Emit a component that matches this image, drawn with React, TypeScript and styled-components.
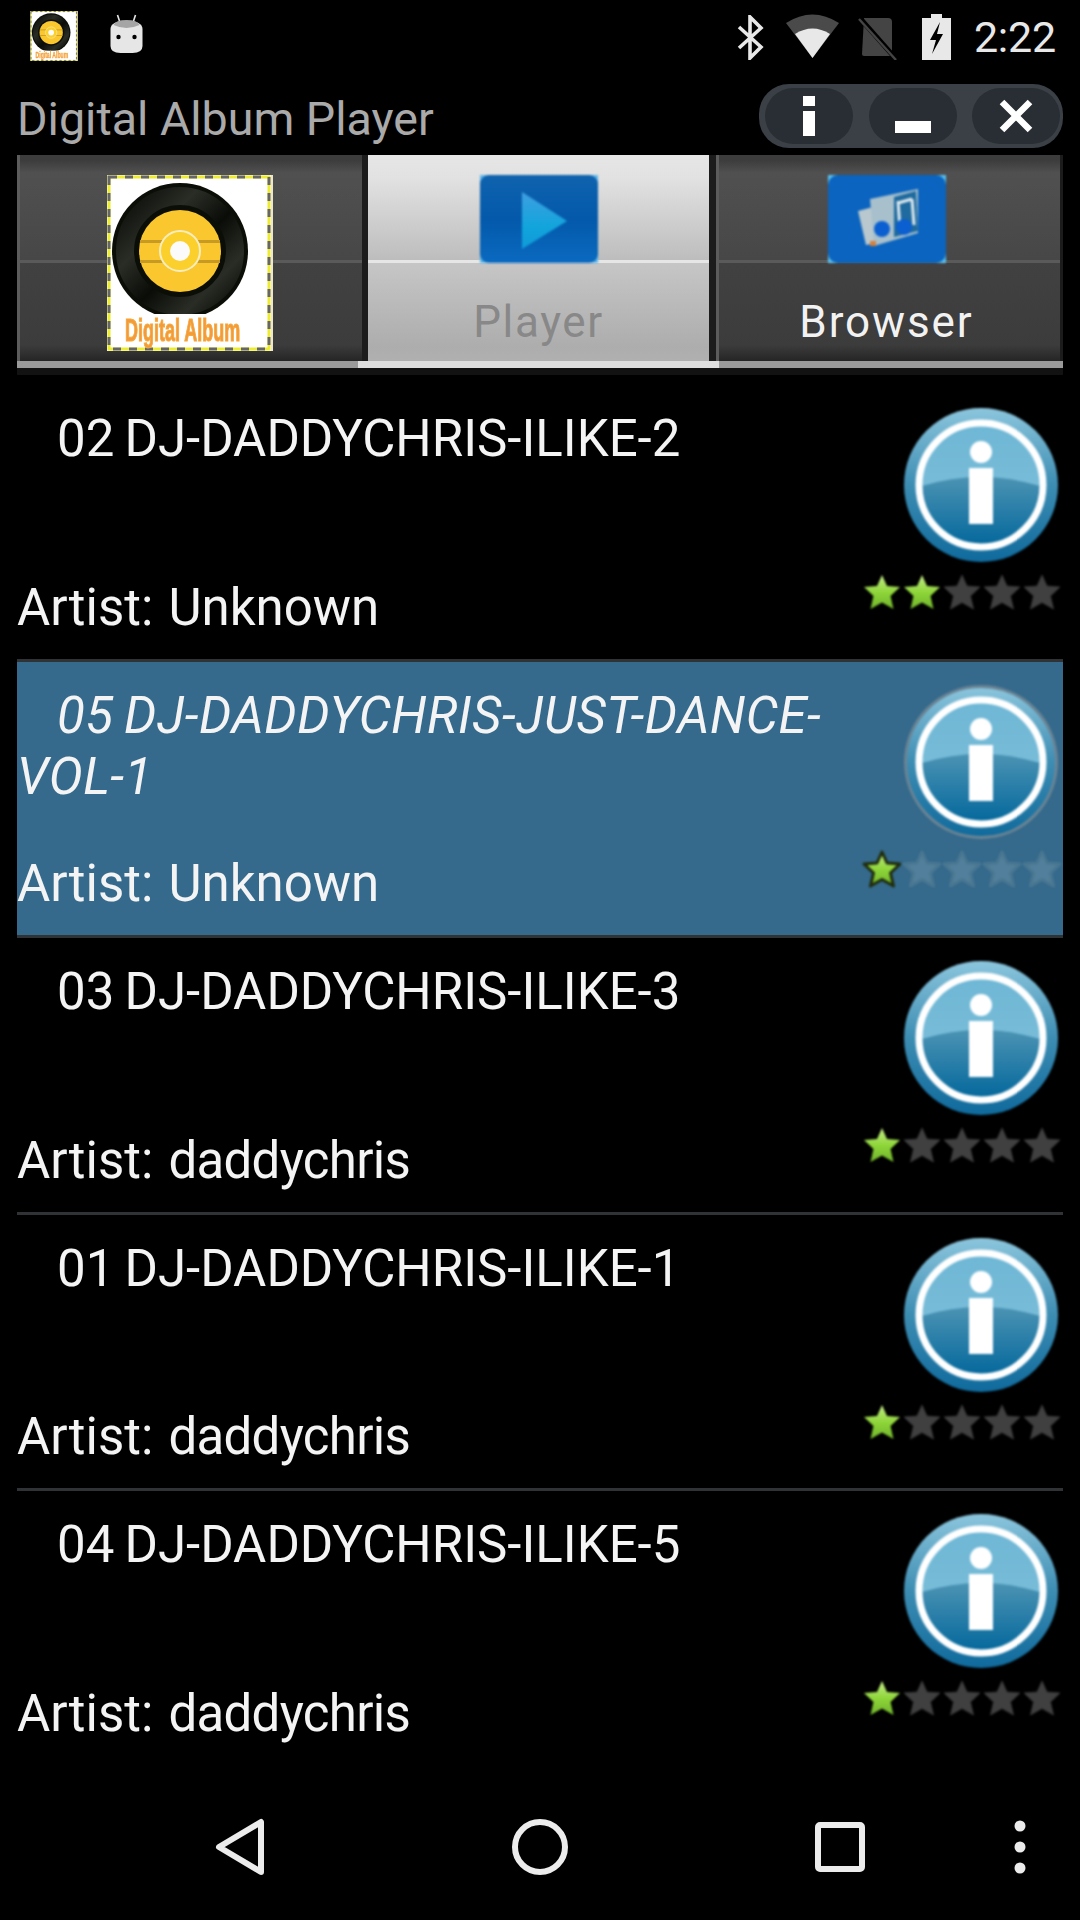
import React from "react";
import styled, { createGlobalStyle } from "styled-components";

const Global = createGlobalStyle`
  html, body { margin: 0; padding: 0; background: #000; }
  #root { width: 1080px; height: 1920px; }
  * { box-sizing: border-box; }
`;

const Page = styled.div`
  width: 1080px; height: 1920px; background: #000; color: #fff;
  display: flex; flex-direction: column; overflow: hidden;
  font-family: Roboto, "Liberation Sans", sans-serif;
`;

const StatusBar = styled.div`
  height: 75px; display: flex; align-items: flex-start; justify-content: space-between;
  padding: 11px 24px 0 30px;
`;
const StatusGroup = styled.div`display: flex; align-items: flex-start;`;
const StatusSvg = styled.svg<{ $ml?: number; $mt?: number }>`
  display: block; flex: none;
  margin-left: ${(p) => p.$ml ?? 0}px;
  margin-top: ${(p) => p.$mt ?? 0}px;
`;
const Clock = styled.div`
  margin-left: 23px; font-size: 43px; line-height: 50px; color: #e8e8e8; margin-top: 1px; letter-spacing: -0.2px;
`;

const TitleRow = styled.div`
  height: 80px; display: flex; justify-content: space-between; align-items: flex-start;
  padding: 9px 17px 0 17px;
`;
const AppTitle = styled.div`
  font-size: 46.6px; line-height: 54px; color: #aaaaaa; margin-top: 8px;
`;
const Pill = styled.div`
  width: 304px; height: 64px; background: #3b4047; border-radius: 30px;
  display: flex; align-items: center; justify-content: space-between; padding: 0 3px 0 6px;
`;
const PillButton = styled.div`
  width: 88px; height: 56px; background: #292d34; border-radius: 28px;
  display: flex; align-items: center; justify-content: center;
`;

const TabBar = styled.div`
  margin: 0 17px; display: grid; grid-template-columns: 351px 341px 354px; height: 213px;
`;
const Tab = styled.div<{ $active?: boolean; $edge?: "left" | "right" }>`
  position: relative; height: 213px; padding-top: 20px;
  padding-right: ${(p) => (p.$edge === "left" ? "6px" : "0")};
  display: flex; flex-direction: column; align-items: center;
  border-bottom: 7px solid ${(p) => (p.$active ? "#dedede" : "#9a9a9a")};
  border-left: ${(p) => (p.$edge === "left" ? "7px solid #1c1c1c" : "0")};
  border-right: ${(p) => (p.$edge === "right" ? "6px solid #1c1c1c" : "0")};
  background: ${(p) =>
    p.$active
      ? "linear-gradient(#e6e6e6 0, #e2e2e2 22px, #bdbdbd 105px, #e6e6e6 105px, #e6e6e6 108px, #c6c6c6 108px, #adadad 192px, #b0b0b0 206px)"
      : "linear-gradient(#3c3c3c 0, #3c3c3c 5px, #505050 18px, #474747 105px, #5a5a5a 105px, #5a5a5a 108px, #414141 108px, #3c3c3c 190px, #252525 206px)"};
  box-shadow: ${(p) =>
    p.$active ? "none" : p.$edge === "left" ? "inset 3px 0 0 #5c5c5c, inset -3px 0 0 #1c1c1c" : "inset 3px 0 0 #5c5c5c"};
  &::after {
    content: "";
    display: ${(p) => (p.$active ? "block" : "none")};
    position: absolute; left: -10px; right: -10px; bottom: -7px; height: 7px; z-index: 1;
    background: #dedede;
  }
`;
const TabLabel = styled.div<{ $active?: boolean }>`
  font-size: 44px; line-height: 52px; margin-top: 33px;
  letter-spacing: ${(p) => (p.$active ? "1.6px" : "1.9px")};
  color: ${(p) => (p.$active ? "#888888" : "#f2f2f2")};
`;
const BarShade = styled.div`
  margin: 0 17px; height: 7px; background: #121212; flex: none;
`;
const BlurSvg = styled.svg<{ $blur?: number }>`
  display: block; flex: none; filter: blur(${(p) => p.$blur ?? 0.7}px);
`;

const List = styled.div`
  margin: 10px 17px 0; display: flex; flex-direction: column;
`;
const Row = styled.div<{ $selected?: boolean; $last?: boolean }>`
  height: 276.6px; display: flex; justify-content: space-between;
  background: ${(p) => (p.$selected ? "#356a8c" : "transparent")};
  border-bottom: 3px solid ${(p) => (p.$last ? "transparent" : "#2f3336")};
  ${(p) => (p.$selected ? "margin-top: -3px; height: 279.6px; border-top: 3px solid #2f3336;" : "")}
`;
const TextCol = styled.div`
  flex: 1; min-width: 0; display: flex; flex-direction: column; justify-content: space-between;
  padding-top: 23px; padding-bottom: 21px;
`;
const SongTitle = styled.div<{ $selected?: boolean }>`
  font-size: 51px; line-height: 61px; text-indent: 40px; color: #f4f4f4; width: 835px;
  word-spacing: -2.5px;
  font-style: ${(p) => (p.$selected ? "italic" : "normal")};
  letter-spacing: ${(p) => (p.$selected ? "0.5px" : "0")};
`;
const Artist = styled.div`
  font-size: 51px; line-height: 60px; color: #f4f4f4; word-spacing: 2.5px;
`;
const ArtistName = styled.span<{ $tight: boolean }>`
  letter-spacing: ${(p) => (p.$tight ? "-0.7px" : "0")};
`;
const SideCol = styled.div`
  width: 200px; flex: none; display: flex; flex-direction: column; align-items: flex-end;
  padding-top: 22px;
`;
const InfoSvg = styled(BlurSvg)`margin-right: 4px;`;
const Stars = styled.div`
  display: flex; margin-top: 9px; margin-right: 1px;
`;

const NavBar = styled.div`
  margin-top: auto; height: 144px; padding-left: 90px; padding-bottom: 2px;
  display: grid; grid-template-columns: 300px 300px 300px 60px; align-items: center; justify-items: center;
`;

const Star = ({ lit, selected, id }: { lit: boolean; selected: boolean; id: string }) => {
  const fill = lit ? `url(#${id})` : selected ? "#527f9b" : "#404040";
  const stroke = lit && selected ? "#1f2c0d" : selected ? "#4a7791" : "#333333";
  return (
    <BlurSvg $blur={0.8} width="40" height="40" viewBox="0 0 40 40">
      {lit && (
        <defs>
          <linearGradient id={id} x1="0" y1="0" x2="0" y2="1">
            <stop offset="0" stopColor="#c6ec8c" />
            <stop offset="0.5" stopColor="#8fd63a" />
            <stop offset="1" stopColor="#6fb52a" />
          </linearGradient>
        </defs>
      )}
      <path
        d="M20 3 L25 14 L38 15 L28.5 24 L31.5 37 L20 30.5 L8.5 37 L11.5 24 L2 15 L15 14 Z"
        fill={fill}
        stroke={stroke}
        strokeWidth={selected ? 3 : lit ? 0 : 1}
        strokeLinejoin="round"
      />
    </BlurSvg>
  );
};

const InfoIcon = ({ id, selected }: { id: string; selected: boolean }) => (
  <InfoSvg $blur={1} width="156" height="156" viewBox="0 0 156 156">
    <defs>
      <linearGradient id={`${id}o`} x1="0" y1="0" x2="0" y2="1">
        <stop offset="0" stopColor="#8cc6dd" />
        <stop offset="0.5" stopColor="#3d8db3" />
        <stop offset="1" stopColor="#0f6a9c" />
      </linearGradient>
      <linearGradient id={`${id}l`} x1="0" y1="0" x2="0" y2="1">
        <stop offset="0" stopColor="#5a9fbf" />
        <stop offset="0.45" stopColor="#4a92b3" />
        <stop offset="1" stopColor="#04689c" />
      </linearGradient>
      <linearGradient id={`${id}h`} x1="0" y1="0" x2="0" y2="1">
        <stop offset="0" stopColor="#6cb6d5" />
        <stop offset="1" stopColor="#78bcd8" />
      </linearGradient>
      <clipPath id={`${id}c`}>
        <circle cx="78" cy="78" r="59" />
      </clipPath>
    </defs>
    <circle
      cx="78" cy="78" r={selected ? 75.5 : 77}
      fill={`url(#${id}o)`}
      stroke={selected ? "#6b8494" : "none"}
      strokeWidth={selected ? 3 : 0}
    />
    <circle cx="78" cy="78" r="60" fill={`url(#${id}l)`} />
    <g clipPath={`url(#${id}c)`}>
      <path d="M10 82 Q78 58 146 82 L146 0 L10 0 Z" fill={`url(#${id}h)`} />
    </g>
    <circle cx="78" cy="78" r="62" fill="none" stroke="#ffffff" strokeWidth="7" />
    <circle cx="78" cy="45" r="11" fill="#fff" />
    <rect x="66" y="61" width="24" height="56" fill="#fff" />
  </InfoSvg>
);

const AlbumArt = ({ width, height, large }: { width: number; height: number; large: boolean }) => {
  const clip = large ? "discA" : "discB";
  return (
    <BlurSvg $blur={large ? 0.6 : 0.4} width={width} height={height} viewBox="0 0 166 176">
      <defs>
        <linearGradient id={`${clip}s`} x1="0" y1="0" x2="1" y2="1">
          <stop offset="0" stopColor="#0a0c07" />
          <stop offset="0.3" stopColor="#2a2c26" />
          <stop offset="0.55" stopColor="#0a0c07" />
          <stop offset="0.8" stopColor="#2a2c26" />
          <stop offset="1" stopColor="#0a0c07" />
        </linearGradient>
      </defs>
      <rect width="166" height="176" fill="#ffffff" />
      <rect x="2" y="2" width="160" height="172" fill="none" stroke="#ecec30" strokeWidth="3" />
      <rect x="2" y="2" width="160" height="172" fill="none" stroke="#666" strokeWidth="3" strokeDasharray="8 8" />
      <rect x="164" y="0" width="2" height="176" fill="#efe4cc" />
      <clipPath id={clip}>
        <rect x="0" y="0" width="166" height="139" />
      </clipPath>
      <g clipPath={`url(#${clip})`}>
        <circle cx="73" cy="76" r="68" fill="#0b0e07" />
        <circle cx="73" cy="76" r="55" fill="none" stroke={`url(#${clip}s)`} strokeWidth="18" />
      </g>
      <circle cx="73" cy="76" r="41" fill="#fbc72e" />
      <rect x="33" y="65" width="80" height="3" fill="#c79a24" />
      <rect x="33" y="85" width="80" height="3" fill="#c79a24" />
      <circle cx="73" cy="76" r="20" fill="#fbd02c" stroke="#f6edc0" strokeWidth="2" />
      <circle cx="73" cy="76" r="10" fill="#fbfbfb" />
      <text
        transform="translate(18 166) scale(1 1.75)"
        fontFamily="'Liberation Sans', sans-serif" fontWeight="700" fontSize="18"
        fill="#f39a3a" stroke="#f5a83c" strokeWidth="0.7"
      >
        Digital Album
      </text>
    </BlurSvg>
  );
};

const PlayerIcon = () => (
  <BlurSvg $blur={1} width="118" height="88" viewBox="0 0 118 88">
    <defs>
      <linearGradient id="pbg" x1="0" y1="0" x2="0" y2="1">
        <stop offset="0" stopColor="#0f63ae" />
        <stop offset="0.5" stopColor="#0459ab" />
        <stop offset="1" stopColor="#0a6ac0" />
      </linearGradient>
      <linearGradient id="ptri" x1="0" y1="0" x2="0" y2="1">
        <stop offset="0" stopColor="#3f9fe2" />
        <stop offset="0.6" stopColor="#12a5dc" />
        <stop offset="1" stopColor="#0f9ad8" />
      </linearGradient>
    </defs>
    <rect width="118" height="88" fill="#5fb6ea" />
    <rect width="118" height="88" rx="9" fill="url(#pbg)" />
    <path d="M42 17 L87 46 L42 74 Z" fill="url(#ptri)" />
  </BlurSvg>
);

const BrowserIcon = () => (
  <BlurSvg $blur={1.2} width="118" height="88" viewBox="0 0 118 88">
    <rect width="118" height="88" fill="#59c0ee" />
    <rect width="118" height="88" rx="10" fill="#0b64bf" />
    <path d="M30 36 L45 32 L48 68 L38 70 Z" fill="#b9c8ce" />
    <path d="M42 24 L90 14 L90 58 L46 71 Z" fill="#a8c0cc" />
    <path d="M66 22 L88 16 L90 56 L66 62 Z" fill="#1f6a9e" />
    <path d="M70 26 L72 54 M84 24 L86 50 M70 28 L84 24" stroke="#dfeaf0" strokeWidth="3" fill="none" />
    <circle cx="54" cy="54" r="8" fill="#0b5fd0" />
    <circle cx="76" cy="52" r="8" fill="#0b5fd0" />
    <rect x="42" y="66" width="6" height="5" fill="#d8803a" />
  </BlurSvg>
);

const tracks = [
  { title: "02 DJ-DADDYCHRIS-ILIKE-2", artist: "Unknown", rating: 2 },
  { title: "05 DJ-DADDYCHRIS-JUST-DANCE-VOL-1", artist: "Unknown", rating: 1, selected: true },
  { title: "03 DJ-DADDYCHRIS-ILIKE-3", artist: "daddychris", rating: 1 },
  { title: "01 DJ-DADDYCHRIS-ILIKE-1", artist: "daddychris", rating: 1 },
  { title: "04 DJ-DADDYCHRIS-ILIKE-5", artist: "daddychris", rating: 1 },
];

export default function App() {
  return (
    <Page>
      <Global />
      <StatusBar>
        <StatusGroup>
          <AlbumArt width={48} height={50} large={false} />
          <StatusSvg $ml={32} $mt={2} width="33" height="40" viewBox="0 0 32 40">
            <path d="M7 2 L10 11 M25 2 L22 11" stroke="#e6e6e6" strokeWidth="1.6" fill="none" />
            <path d="M0 16 Q0 8 16 8 Q32 8 32 16 L32 33 Q32 40 22 40 L10 40 Q0 40 0 33 Z" fill="#e6e6e6" />
            <path d="M3 12 Q16 18 29 12 Q27 7 16 7 Q5 7 3 12 Z" fill="#a5a5a5" />
            <circle cx="8" cy="24" r="2.2" fill="#000" />
            <circle cx="24" cy="24" r="2.2" fill="#000" />
          </StatusSvg>
        </StatusGroup>
        <StatusGroup>
          <StatusSvg $mt={4} width="27" height="45" viewBox="0 0 27 45">
            <path d="M2 12 L24 32 L13 43 L13 2 L24 13 L2 33" fill="none" stroke="#e8e8e8" strokeWidth="3.6" />
          </StatusSvg>
          <StatusSvg $ml={22} $mt={3} width="53" height="44" viewBox="0 0 53 44">
            <path d="M0 9 Q26.5 -8 53 9 L26.5 44 Z" fill="#4a4a4a" />
            <path d="M9 20 Q26.5 9 44 20 L26.5 44 Z" fill="#e8e8e8" />
          </StatusSvg>
          <StatusSvg $ml={19} $mt={5} width="40" height="44" viewBox="0 0 40 44">
            <path d="M6 2 L30 2 Q34 2 34 6 L34 40 L6 40 Q4 40 4 38 Z" fill="#444" />
            <path d="M1 1 L38 43" stroke="#000" strokeWidth="5" />
            <path d="M1 3 L38 44" stroke="#444" strokeWidth="2.4" />
          </StatusSvg>
          <StatusSvg $ml={24} $mt={3} width="29" height="46" viewBox="0 0 29 46">
            <path d="M9 0 L20 0 L20 4 L29 4 L29 46 L0 46 L0 4 L9 4 Z" fill="#e8e8e8" />
            <path d="M18 8 L8 26 L14 26 L10 40 L21 20 L15 20 Z" fill="#000" />
          </StatusSvg>
          <Clock>2:22</Clock>
        </StatusGroup>
      </StatusBar>

      <TitleRow>
        <AppTitle>Digital Album Player</AppTitle>
        <Pill>
          <PillButton>
            <svg width="12" height="40" viewBox="0 0 12 40"><rect width="12" height="10" fill="#fff" /><rect y="15" width="12" height="25" fill="#fff" /></svg>
          </PillButton>
          <PillButton>
            <svg width="36" height="40" viewBox="0 0 36 40"><rect y="25" width="36" height="12" fill="#fff" /></svg>
          </PillButton>
          <PillButton>
            <svg width="34" height="34" viewBox="0 0 34 34"><path d="M3 3 L31 31 M31 3 L3 31" stroke="#fff" strokeWidth="6.5" /></svg>
          </PillButton>
        </Pill>
      </TitleRow>

      <TabBar>
        <Tab $edge="right">
          <AlbumArt width={166} height={176} large />
        </Tab>
        <Tab $active>
          <PlayerIcon />
          <TabLabel $active>Player</TabLabel>
        </Tab>
        <Tab $edge="left">
          <BrowserIcon />
          <TabLabel>Browser</TabLabel>
        </Tab>
      </TabBar>
      <BarShade />

      <List>
        {tracks.map((t, i) => (
          <Row key={t.title} $selected={t.selected} $last={i === tracks.length - 1}>
            <TextCol>
              <SongTitle $selected={t.selected}>{t.title}</SongTitle>
              <Artist>
                Artist: <ArtistName $tight={t.artist === "daddychris"}>{t.artist}</ArtistName>
              </Artist>
            </TextCol>
            <SideCol>
              <InfoIcon id={`info${i}`} selected={!!t.selected} />
              <Stars>
                {[0, 1, 2, 3, 4].map((s) => (
                  <Star key={s} id={`star${i}${s}`} lit={s < t.rating} selected={!!t.selected} />
                ))}
              </Stars>
            </SideCol>
          </Row>
        ))}
      </List>

      <NavBar>
        <svg width="50" height="58" viewBox="0 0 50 58">
          <path d="M46 4 L46 54 L4 29 Z" fill="none" stroke="#ececec" strokeWidth="6" strokeLinejoin="round" />
        </svg>
        <svg width="56" height="56" viewBox="0 0 56 56">
          <circle cx="28" cy="28" r="25" fill="none" stroke="#ececec" strokeWidth="6" />
        </svg>
        <svg width="50" height="50" viewBox="0 0 50 50">
          <rect x="3" y="3" width="44" height="44" rx="2" fill="none" stroke="#ececec" strokeWidth="6" />
        </svg>
        <svg width="12" height="54" viewBox="0 0 12 54">
          <circle cx="6" cy="6" r="5.5" fill="#ececec" />
          <circle cx="6" cy="27" r="5.5" fill="#ececec" />
          <circle cx="6" cy="48" r="5.5" fill="#ececec" />
        </svg>
      </NavBar>
    </Page>
  );
}
